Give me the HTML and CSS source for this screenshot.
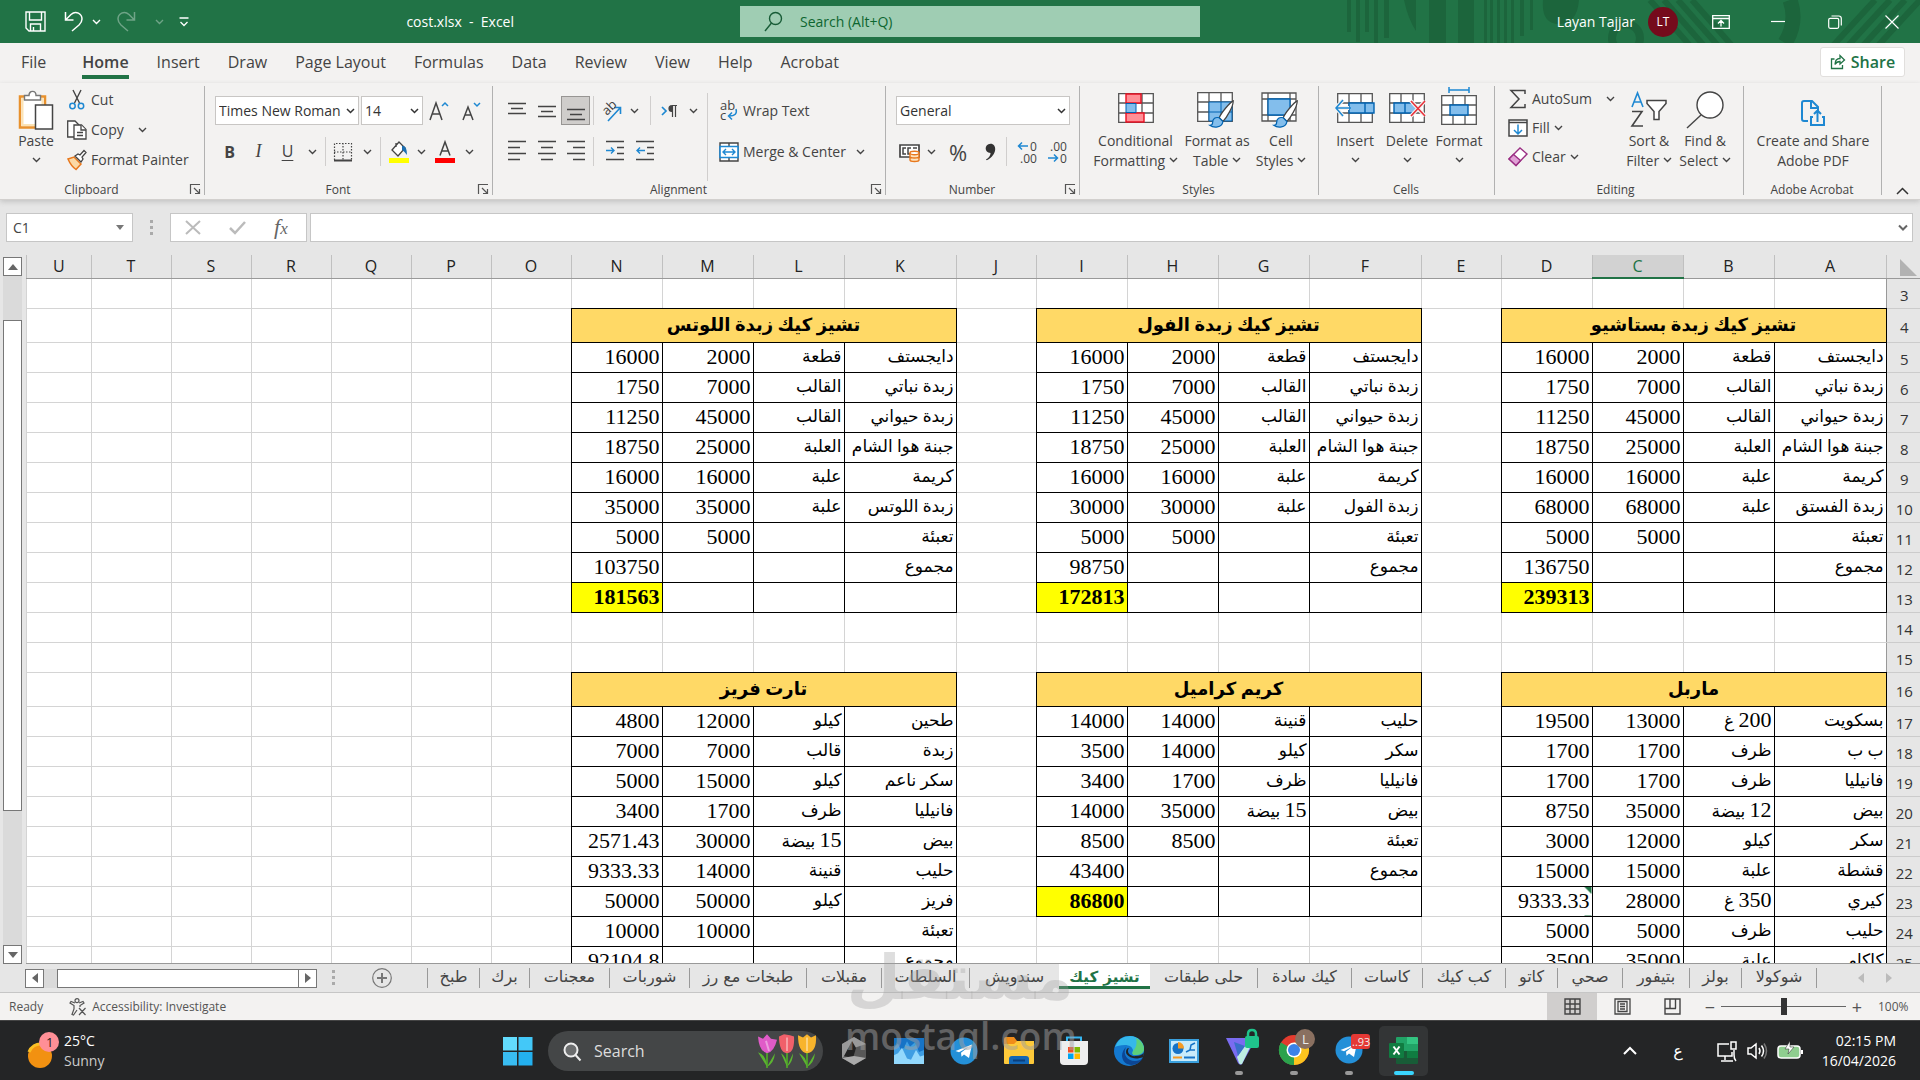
FILE: index.html
```html
<!DOCTYPE html>
<html lang="en">
<head>
<meta charset="utf-8">
<title>cost.xlsx - Excel</title>
<link rel="stylesheet" href="styles.css">
</head>
<body>
<svg class="defs" aria-hidden="true">
  <symbol id="chev" viewBox="0 0 9 6"><path d="M1 1l3.500 3.500L8 1" fill="none" stroke="currentColor" stroke-width="1.400"/></symbol>
  <symbol id="launch" viewBox="0 0 12 12"><path d="M1.500 11V1.500H11M5 5l5.500 5.500M10.500 6v4.500H6" fill="none" stroke="#555" stroke-width="1.200"/></symbol>
  <symbol id="gridbase" viewBox="0 0 36 30"><path d="M.7.700h34.600v28.600H.7z" fill="#fff"/><path d="M.7.700h34.600v28.600H.7zM.7 10h34.600M.7 20h34.600M12 .7v28.600M24 .7v28.600" fill="none" stroke="#555" stroke-width="1.300"/></symbol>
  <symbol id="brush" viewBox="0 0 28 32"><path d="M26 2C22 4 13 15 11 20l4 4C19 20 26 8 26 2z" fill="#fff" stroke="#444" stroke-width="1.300"/><path d="M11 20c-4-1-7 1-7 5 0 2-1 3-3 3 4 3 13 3 14-4z" fill="#83beec" stroke="#0063b1" stroke-width="1.300"/></symbol>
  <symbol id="plane" viewBox="0 0 28 28"><circle cx="14" cy="14" r="13.500" fill="#2490d8"/><path d="M5.500 14L22 7.500 19 21l-5-3.600-2.500 2.400-.5-4 7-5.500-9 5z" fill="#fff"/></symbol>
</svg>

<header class="titlebar">
  <div class="quick">
    <button aria-label="Save"><svg width="21" height="21" viewBox="0 0 21 21" fill="none" stroke="#fff" stroke-width="1.400"><path d="M1 1h19v19H4l-3-3zM4.500 1v8h12V1M5.500 20v-7h10v7M8.500 20v-4"/></svg></button>
    <button aria-label="Undo"><svg width="20" height="21" viewBox="0 0 20 21" fill="none" stroke="#fff" stroke-width="1.500"><path d="M1.500 1v8h8M1.500 9L7 3.500C12-1 18 3 18 8c0 3-1 4-3 6l-7 6"/></svg></button>
    <button aria-label="Undo list"><svg width="9" height="6"><use href="#chev"/></svg></button>
    <button class="dim" aria-label="Redo"><svg width="20" height="21" viewBox="0 0 20 21" fill="none" stroke="#fff" stroke-width="1.500"><path d="M18.500 1v8h-8M18.500 9L13 3.500C8-1 2 3 2 8c0 3 1 4 3 6l7 6"/></svg></button>
    <button class="dim" aria-label="Redo list"><svg width="9" height="6"><use href="#chev"/></svg></button>
    <button aria-label="Customize toolbar"><svg width="10" height="10" viewBox="0 0 10 10" fill="none" stroke="#fff" stroke-width="1.300"><path d="M.5 1h9M1.500 5L5 8.500 8.500 5"/></svg></button>
  </div>
  <h1>cost.xlsx&nbsp; -&nbsp; Excel</h1>
  <label class="search"><svg width="19" height="22" viewBox="0 0 19 22" fill="none" stroke="#185c37" stroke-width="1.400"><circle cx="11.500" cy="7.500" r="6"/><path d="M7.500 12L1 20"/></svg><input type="search" placeholder="Search (Alt+Q)" aria-label="Search"></label>
  <div class="account">
    <svg class="pattern" viewBox="0 0 620 43" fill="#1c653c" stroke="#1c653c" aria-hidden="true"><path stroke="none" d="M47 0h4v32h-4zM56 0h4v42h-4zM65 0h4v32h-4zM74 0h4v43h-4zM84 0h5v38h-5zM104 0h12v31q-8-12-12-31M129 0h17v43h-17zM158 0h16v43h-16zM184 0h3v43h-3zM190 0h3v43h-3zM197 0h3v43h-3zM204 0h3v43h-3zM211 0h3v43h-3zM220 0h4v36h-4zM230 0h3v30h-3zM243 0h36q-2 24-20 24T243 0z"/><g fill="none"><circle cx="326" cy="38" r="14" stroke-width="8"/><path d="M350 0l42 48M364 0l42 48M378 0l42 48M392 0l42 48" stroke-width="6"/><path d="M490 0q8 22-5 43" stroke-width="15"/><path d="M575 0l-46 50M590 0l-46 50M605 0l-46 50M620 0l-46 50" stroke-width="6"/></g></svg>
    <span class="user">Layan Tajjar</span><span class="avatar">LT</span>
    <button aria-label="Ribbon display options"><svg width="18" height="14" viewBox="0 0 18 14" fill="none" stroke="#fff" stroke-width="1.300"><path d="M.7.700h16.600v12.600H.7zM.7 3.500h16.600M9 11.500V6M6 8.500L9 5.500l3 3"/></svg></button>
    <button aria-label="Minimize"><svg width="14" height="14" viewBox="0 0 14 14" stroke="#fff" stroke-width="1.200"><path d="M0 6.500h14"/></svg></button>
    <button aria-label="Restore"><svg width="14" height="14" viewBox="0 0 14 14" fill="none" stroke="#fff" stroke-width="1.200"><rect x=".7" y="3.300" width="10" height="10" rx="1.500"/><path d="M3.500 1h7.300q2.500 0 2.500 2.500v7"/></svg></button>
    <button aria-label="Close"><svg width="14" height="14" viewBox="0 0 14 14" stroke="#fff" stroke-width="1.200"><path d="M.5.500l13 13M13.500.500l-13 13"/></svg></button>
  </div>
</header>

<nav class="tabs">
  <a href="#">File</a><a href="#" class="on">Home</a><a href="#">Insert</a><a href="#">Draw</a><a href="#">Page Layout</a><a href="#">Formulas</a><a href="#">Data</a><a href="#">Review</a><a href="#">View</a><a href="#">Help</a><a href="#">Acrobat</a>
  <button class="share"><svg width="16" height="16" viewBox="0 0 16 16" fill="none" stroke="#217346" stroke-width="1.300"><path d="M4.500 5H1.500v9.500h11V11M5 10.500c0-4 2-6 5-6V1.500L14.500 6 10 10V7.500c-2.500 0-4 1-5 3z"/></svg>Share</button>
</nav>

<section class="ribbon" aria-label="Home ribbon">
  <div class="group clip">
    <div class="body">
      <button class="big"><svg width="36" height="40" viewBox="0 0 36 40"><path d="M2 6.500h25v31H2z" fill="#fff" stroke="#e8912d" stroke-width="2.500"/><path d="M4.500 9h20v26h-20z" fill="none" stroke="#fbe3b5" stroke-width="2"/><path d="M6.500 10V5.500H11C11 0 18 0 18 5.500h4.500V10z" fill="#fff" stroke="#777" stroke-width="1.400"/><path d="M17.500 15h17v24h-17z" fill="#fff" stroke="#444" stroke-width="1.500"/></svg><span>Paste</span><svg class="down" width="9" height="6"><use href="#chev"/></svg></button>
      <div class="list">
        <button><svg width="20" height="20" viewBox="0 0 20 20" fill="none"><path d="M6 0l6.500 13M14 0L7.500 13" stroke="#444" stroke-width="1.400"/><circle cx="5.500" cy="16" r="2.700" stroke="#1e88d2" stroke-width="1.500"/><circle cx="14" cy="16" r="2.700" stroke="#1e88d2" stroke-width="1.500"/></svg>Cut</button>
        <button><svg width="20" height="20" viewBox="0 0 20 20" fill="#fff" stroke="#444" stroke-width="1.300"><path d="M7 17H.7V1H8l4 4"/><path d="M7 5h7.500L19 9.500V19H7z"/><path d="M14 5v5h5M10 12.500h6M10 15.500h6"/></svg>Copy<svg class="gap" width="9" height="6"><use href="#chev"/></svg></button>
        <button><svg width="20" height="20" viewBox="0 0 20 20"><path d="M1 9l6-2 7 7-5 5.500Q4 16 1 9z" fill="#fbd9a5" stroke="#e8781d" stroke-width="1.500"/><path d="M8 6l3-2 2 1 4-4.500 2 2-4 4.500 1 2-2 3z" fill="#fff" stroke="#444" stroke-width="1.300"/></svg>Format Painter</button>
      </div>
    </div>
    <footer>Clipboard<button aria-label="Clipboard settings"><svg width="12" height="12"><use href="#launch"/></svg></button></footer>
  </div>

  <div class="group font">
    <div class="body rows">
      <div class="row fr1">
        <select aria-label="Font"><option>Times New Roman</option></select><select aria-label="Font size"><option>14</option></select>
        <button aria-label="Increase font size"><svg width="20" height="20" viewBox="0 0 20 20" fill="none" stroke="#444" stroke-width="1.500"><path d="M1 19L7 2l6 17M3 13h8"/><path d="M13 5l3-3 3 3" stroke="#1e88d2"/></svg></button>
        <button aria-label="Decrease font size"><svg width="20" height="20" viewBox="0 0 20 20" fill="none" stroke="#444" stroke-width="1.500"><path d="M2 19L7 6l5 13M4 14h6"/><path d="M13 2l3 3 3-3" stroke="#1e88d2"/></svg></button>
      </div>
      <div class="row fr2">
        <button><b>B</b></button><button class="it">I</button><button class="un">U</button><button aria-label="Underline list"><svg width="9" height="6"><use href="#chev"/></svg></button><i></i>
        <button aria-label="Borders"><svg width="20" height="20" viewBox="0 0 20 20" fill="none" stroke="#444"><path d="M1.500 18V1.500h17V18M10 1v17M1 10h18" stroke-width="1.200" stroke-dasharray="1.500 1.500"/><path d="M1 18.500h18" stroke-width="2"/></svg></button><button aria-label="Borders list"><svg width="9" height="6"><use href="#chev"/></svg></button><i></i>
        <button aria-label="Fill color"><svg width="20" height="22" viewBox="0 0 20 22"><path d="M0 17h20v5H0z" fill="#ff0"/><path d="M3 9l7-8 6 6-7 8zM7 6V2" fill="#fff" stroke="#444" stroke-width="1.300"/><path d="M13 5q5-1 5 9-3-4-5-5z" fill="#1e6fb0"/></svg></button><button aria-label="Fill list"><svg width="9" height="6"><use href="#chev"/></svg></button>
        <button aria-label="Font color"><svg width="20" height="22" viewBox="0 0 20 22"><path d="M0 17h20v5H0z" fill="#f00"/><path d="M5 14.500L10 1l5 13.500M7 10h6" fill="none" stroke="#444" stroke-width="1.500"/></svg></button><button aria-label="Font color list"><svg width="9" height="6"><use href="#chev"/></svg></button>
      </div>
    </div>
    <footer>Font<button aria-label="Font settings"><svg width="12" height="12"><use href="#launch"/></svg></button></footer>
  </div>

  <div class="group align">
    <div class="body">
      <div class="rows">
        <div class="row ar">
          <button aria-label="Top align"><svg width="18" height="20" viewBox="0 0 18 20" stroke="#444" stroke-width="1.400"><path d="M0 2.500h18M3 7.500h12M0 12.500h18"/></svg></button>
          <button aria-label="Middle align"><svg width="18" height="20" viewBox="0 0 18 20" stroke="#444" stroke-width="1.400"><path d="M0 5.500h18M3 10.500h12M0 15.500h18"/></svg></button>
          <button class="pressed" aria-label="Bottom align"><svg width="18" height="20" viewBox="0 0 18 20" stroke="#444" stroke-width="1.400"><path d="M0 8.500h18M3 13.500h12M0 18.500h18"/></svg></button><i></i>
          <button aria-label="Orientation"><svg width="22" height="22" viewBox="0 0 22 22"><path d="M8 21L20 8M14 7.500h6.500V14" fill="none" stroke="#1e88d2" stroke-width="1.600"/><text font-size="13" transform="translate(7 16) rotate(-45)">ab</text></svg></button><button aria-label="Orientation list"><svg width="9" height="6"><use href="#chev"/></svg></button><i></i>
          <button aria-label="Text direction"><svg width="18" height="16" viewBox="0 0 18 16"><path d="M1 4l4 4-4 4" fill="none" stroke="#1e88d2" stroke-width="1.700"/><path d="M16 2.500H11a3 3 0 000 6V2.500M11.500 2v12M14.500 2v12" fill="#444" stroke="#444" stroke-width="1.200"/></svg></button><button aria-label="Direction list"><svg width="9" height="6"><use href="#chev"/></svg></button>
        </div>
        <div class="row ar2">
          <button aria-label="Align left"><svg width="18" height="21" viewBox="0 0 18 21" stroke="#444" stroke-width="1.400"><path d="M0 .5h18M0 6.500h12M0 12.500h18M0 18.500h12"/></svg></button>
          <button aria-label="Center"><svg width="18" height="21" viewBox="0 0 18 21" stroke="#444" stroke-width="1.400"><path d="M0 .5h18M3 6.500h12M0 12.500h18M3 18.500h12"/></svg></button>
          <button aria-label="Align right"><svg width="18" height="21" viewBox="0 0 18 21" stroke="#444" stroke-width="1.400"><path d="M0 .5h18M6 6.500h12M0 12.500h18M6 18.500h12"/></svg></button><i></i>
          <button aria-label="Decrease indent"><svg width="18" height="21" viewBox="0 0 18 21" fill="none" stroke="#444" stroke-width="1.400"><path d="M0 .5h18M11 6.500h7M11 12.500h7M0 18.500h18"/><path d="M0 9.500h8M5 6.500l3 3-3 3" stroke="#1e88d2"/></svg></button>
          <button aria-label="Increase indent"><svg width="18" height="21" viewBox="0 0 18 21" fill="none" stroke="#444" stroke-width="1.400"><path d="M0 .5h18M11 6.500h7M11 12.500h7M0 18.500h18"/><path d="M1 9.500h8M4 6.500l-3 3 3 3" stroke="#1e88d2"/></svg></button>
        </div>
      </div>
      <div class="rows wrap">
        <button><svg width="20" height="20" viewBox="0 0 20 20"><text x="1" y="9" font-size="13">ab</text><text x="1" y="19" font-size="13">c</text><path d="M17 8q2 7-7 7M13 11.500L9.500 15l3.500 3.500" fill="none" stroke="#1e88d2" stroke-width="1.500"/></svg>Wrap Text</button>
        <button><svg width="20" height="20" viewBox="0 0 20 20" fill="none"><path d="M1 1h18v18H1zM10 1v4M10 15v4" fill="#fff" stroke="#444" stroke-width="1.400"/><path d="M1 4.500h18v11H1z" fill="#fff" stroke="#1e88d2" stroke-width="1.600"/><path d="M4 10h12M7 7l-3 3 3 3M13 7l3 3-3 3" stroke="#1e88d2" stroke-width="1.400"/></svg>Merge &amp; Center<svg class="gap" width="9" height="6"><use href="#chev"/></svg></button>
      </div>
    </div>
    <footer>Alignment<button aria-label="Alignment settings"><svg width="12" height="12"><use href="#launch"/></svg></button></footer>
  </div>

  <div class="group number">
    <div class="body rows">
      <div class="row"><select aria-label="Number format"><option>General</option></select></div>
      <div class="row nr">
        <button aria-label="Accounting format"><svg width="22" height="22" viewBox="0 0 22 22" fill="none"><path d="M1 4h19v12H1z" fill="#fff" stroke="#444" stroke-width="1.700"/><path d="M7 7H4v6h3M12 7H9v6h3M14 7h4" stroke="#444" stroke-width="1.500"/><path d="M11 12v7c0 2 9 2 9 0v-7M11 15.500c0 2 9 2 9 0" fill="#fde3bd" stroke="#e8781d" stroke-width="1.400"/><ellipse cx="15.500" cy="12" rx="4.500" ry="1.700" fill="#fff" stroke="#e8781d" stroke-width="1.400"/></svg></button><button aria-label="Accounting list"><svg width="9" height="6"><use href="#chev"/></svg></button>
        <button class="pct">%</button>
        <button aria-label="Comma style"><svg width="11" height="18" viewBox="0 0 12 18"><path d="M6 0c7 0 8 12-4 18l-1-1c4-2 5-5 5-7C-1 10-1 0 6 0z" fill="#333"/></svg></button><i></i>
        <button aria-label="Increase decimal"><svg width="20" height="24" viewBox="0 0 20 24"><text x="13" y="11" font-size="12">0</text><text x="3" y="23" font-size="12">.00</text><path d="M11 6H1.500M5 2.500L1.500 6 5 9.500" fill="none" stroke="#1e88d2" stroke-width="1.500"/></svg></button>
        <button aria-label="Decrease decimal"><svg width="20" height="24" viewBox="0 0 20 24"><text x="3" y="11" font-size="12">.00</text><text x="13" y="23" font-size="12">0</text><path d="M1 18h9.500M7 14.500l3.500 3.500L7 21.500" fill="none" stroke="#1e88d2" stroke-width="1.500"/></svg></button>
      </div>
    </div>
    <footer>Number<button aria-label="Number settings"><svg width="12" height="12"><use href="#launch"/></svg></button></footer>
  </div>

  <div class="group styles">
    <div class="body">
      <button class="big"><svg width="36" height="30" viewBox="0 0 36 30"><use href="#gridbase"/><path d="M8 1h15v9H8zM8 20h18v9H8z" fill="#ff8f96" stroke="#e81123" stroke-width="1.400"/><path d="M8 10.500h10v9H8z" fill="#83beec" stroke="#0063b1"/></svg><span>Conditional<br>Formatting <svg width="9" height="6"><use href="#chev"/></svg></span></button>
      <button class="big"><svg width="40" height="38" viewBox="0 0 40 38"><use href="#gridbase" width="36" height="30" y="1"/><path d="M12 11h23v19H12z" fill="#83beec" stroke="#0063b1"/><path d="M24 11v19M12 21h23" stroke="#0063b1"/><use href="#brush" x="11" y="8" width="28" height="30"/></svg><span>Format as<br>Table <svg width="9" height="6"><use href="#chev"/></svg></span></button>
      <button class="big"><svg width="40" height="38" viewBox="0 0 40 38"><path d="M1 2h34v28H1zM1 8h34M1 24h34M7 2v28M29 2v28" fill="#fff" stroke="#555" stroke-width="1.300"/><path d="M7 8h22v16H7z" fill="#83beec" stroke="#0063b1" stroke-width="1.300"/><use href="#brush" x="11" y="8" width="28" height="30"/></svg><span>Cell<br>Styles <svg width="9" height="6"><use href="#chev"/></svg></span></button>
    </div>
    <footer>Styles</footer>
  </div>

  <div class="group cells">
    <div class="body">
      <button class="big"><svg width="40" height="30" viewBox="0 0 40 30"><use href="#gridbase" width="36" height="30" x="2"/><path d="M14 10h25v10H14zM30 10v10" fill="#83beec" stroke="#0063b1" stroke-width="1.400"/><path d="M0 15h14M8 7l-7 8 7 8" fill="none" stroke="#f3f2f1" stroke-width="4"/><path d="M1 15h15M8 7l-7 8 7 8" fill="none" stroke="#1e88d2" stroke-width="1.500"/></svg><span>Insert</span><svg class="down" width="9" height="6"><use href="#chev"/></svg></button>
      <button class="big"><svg width="40" height="30" viewBox="0 0 40 30"><use href="#gridbase" width="36" height="30" x="2"/><path d="M7 10h19l4 5-4 5H7zM18 10v10" fill="#83beec" stroke="#0063b1" stroke-width="1.400"/><path d="M24 8l14 15M38 8L24 23" stroke="#f3f2f1" stroke-width="4"/><path d="M24 8l14 15M38 8L24 23" stroke="#e8313a" stroke-width="1.600"/></svg><span>Delete</span><svg class="down" width="9" height="6"><use href="#chev"/></svg></button>
      <button class="big tall"><svg width="36" height="40" viewBox="0 0 36 40"><path d="M8 3h20M8 0v6M28 0v6" stroke="#1e88d2" stroke-width="1.500"/><use href="#gridbase" width="36" height="30" y="8"/><path d="M9 18h18v10H9z" fill="#83beec" stroke="#0063b1" stroke-width="1.400"/></svg><span>Format</span><svg class="down" width="9" height="6"><use href="#chev"/></svg></button>
    </div>
    <footer>Cells</footer>
  </div>

  <div class="group edit">
    <div class="body">
      <div class="list">
        <button><svg width="20" height="20" viewBox="0 0 20 20" fill="none" stroke="#444" stroke-width="1.500"><path d="M17 5V1.500H3l8 8.500-8 8.500h14V15"/></svg>AutoSum<svg class="gap" width="9" height="6"><use href="#chev"/></svg></button>
        <button><svg width="20" height="20" viewBox="0 0 20 20" fill="none"><path d="M1 2h18v16H1z" fill="#fff" stroke="#444" stroke-width="1.500"/><path d="M1 4.500h18" stroke="#444" stroke-width="1.500"/><path d="M10 6.500V16M6 12l4 4 4-4" stroke="#1e88d2" stroke-width="1.500"/></svg>Fill<svg class="near" width="9" height="6"><use href="#chev"/></svg></button>
        <button><svg width="20" height="20" viewBox="0 0 20 20"><path d="M1 12L12 1l7 6L8 18.500z" fill="#fff" stroke="#9b2f84" stroke-width="1.400"/><path d="M1 12l4.500-4.500 7 6L8 18.500z" fill="#e0a1d6" stroke="#9b2f84" stroke-width="1.400"/></svg>Clear<svg class="near" width="9" height="6"><use href="#chev"/></svg></button>
      </div>
      <button class="big"><svg width="36" height="36" viewBox="0 0 36 36" fill="none"><path d="M1 15L6.500 1 12 15M3 10h7" stroke="#1e88d2" stroke-width="1.600"/><path d="M1 19.500h10L1 34h11" stroke="#444" stroke-width="1.600"/><path d="M16 8.500h19v3l-7 8v8h-5v-8l-7-8z" fill="#fff" stroke="#444" stroke-width="1.500"/></svg><span>Sort &amp;<br>Filter <svg width="9" height="6"><use href="#chev"/></svg></span></button>
      <button class="big"><svg width="38" height="38" viewBox="0 0 38 38" fill="#fff" stroke="#444" stroke-width="1.400"><circle cx="24" cy="14" r="13"/><path d="M15 24L1 37"/></svg><span>Find &amp;<br>Select <svg width="9" height="6"><use href="#chev"/></svg></span></button>
    </div>
    <footer>Editing</footer>
  </div>

  <div class="group pdf">
    <div class="body">
      <button class="big"><svg width="26" height="28" viewBox="0 0 26 28" fill="none" stroke="#1e88d2" stroke-width="2"><path d="M8 22H4q-2 0-2-2V4q0-2 2-2h8l6 6v4M11 2v7h7M13 18h-2v8h13v-8h-2M17.500 23V12M14 15l3.500-3.500L21 15"/></svg><span>Create and Share<br>Adobe PDF</span></button>
    </div>
    <footer>Adobe Acrobat</footer>
  </div>
  <button class="collapse" aria-label="Collapse ribbon"><svg width="13" height="8" viewBox="0 0 13 8" fill="none" stroke="#333" stroke-width="1.500"><path d="M1 7l5.500-5.500L12 7"/></svg></button>
</section>

<div class="formula">
  <div class="namebox"><input value="C1" aria-label="Name box"><svg width="8" height="5"><path d="M0 0h8L4 5z" fill="#777"/></svg></div>
  <span class="dots"></span>
  <div class="fx">
    <button aria-label="Cancel"><svg width="16" height="15" viewBox="0 0 16 15"><path d="M1 1l14 13M15 1L1 14" stroke="#bbb" stroke-width="2"/></svg></button>
    <button aria-label="Enter"><svg width="17" height="14" viewBox="0 0 17 14"><path d="M1 7l5 5L16 1" fill="none" stroke="#bbb" stroke-width="2.500"/></svg></button>
    <button class="f"><em>f<small>x</small></em></button>
  </div>
  <div class="bar"><input aria-label="Formula bar"><svg width="10" height="7"><path d="M1 1.500L5 5.500 9 1.500" fill="none" stroke="#666" stroke-width="2"/></svg></div>
</div>

<main class="sheet">
  <div class="vscroll"><button aria-label="Scroll up"><svg width="10" height="6"><path d="M0 6L5 0l5 6z" fill="#666"/></svg></button><div class="vtrack"><div class="vthumb"></div></div><button aria-label="Scroll down"><svg width="10" height="6"><path d="M0 0h10L5 6z" fill="#666"/></svg></button></div>
  <div class="cellsview">
    <table dir="rtl">
      <colgroup><col class="h"><col class="w"><col span="3"><col class="e"><col class="w"><col span="3"><col class="e"><col class="w"><col span="3"><col class="e" span="6"><col class="u"></colgroup>
      <thead><tr><th><svg width="17" height="17"><path d="M0 0v17h17z" fill="#b2b2b2"/></svg><th>A<th>B<th class="sel">C<th>D<th>E<th>F<th>G<th>H<th>I<th>J<th>K<th>L<th>M<th>N<th>O<th>P<th>Q<th>R<th>S<th>T<th>U</tr></thead>
      <tbody>
      <tr><th>3 <td><td><td> <td><td><td> <td><td><td> <td><td><td> <td><td><td> <td><td><td> <td><td><td>
      <tr class="t"><th>4<td colspan="4">تشيز كيك زبدة بستاشيو<td><td colspan="4">تشيز كيك زبدة الفول<td><td colspan="4">تشيز كيك زبدة اللوتس <td><td><td> <td><td><td> <td>
      <tr class="r"><th>5<td>دايجستف<td>قطعة<td>2000<td>16000<td><td>دايجستف<td>قطعة<td>2000<td>16000<td><td>دايجستف<td>قطعة<td>2000<td>16000 <td><td><td> <td><td><td> <td>
      <tr class="r"><th>6<td>زبدة نباتي<td>القالب<td>7000<td>1750<td><td>زبدة نباتي<td>القالب<td>7000<td>1750<td><td>زبدة نباتي<td>القالب<td>7000<td>1750 <td><td><td> <td><td><td> <td>
      <tr class="r"><th>7<td>زبدة حيواني<td>القالب<td>45000<td>11250<td><td>زبدة حيواني<td>القالب<td>45000<td>11250<td><td>زبدة حيواني<td>القالب<td>45000<td>11250 <td><td><td> <td><td><td> <td>
      <tr class="r"><th>8<td>جبنة هوا الشام<td>العلبة<td>25000<td>18750<td><td>جبنة هوا الشام<td>العلبة<td>25000<td>18750<td><td>جبنة هوا الشام<td>العلبة<td>25000<td>18750 <td><td><td> <td><td><td> <td>
      <tr class="r"><th>9<td>كريمة<td>علبة<td>16000<td>16000<td><td>كريمة<td>علبة<td>16000<td>16000<td><td>كريمة<td>علبة<td>16000<td>16000 <td><td><td> <td><td><td> <td>
      <tr class="r"><th>10<td>زبدة الفستق<td>علبة<td>68000<td>68000<td><td>زبدة الفول<td>علبة<td>30000<td>30000<td><td>زبدة اللوتس<td>علبة<td>35000<td>35000 <td><td><td> <td><td><td> <td>
      <tr class="r"><th>11<td>تعبئة<td><td>5000<td>5000<td><td>تعبئة<td><td>5000<td>5000<td><td>تعبئة<td><td>5000<td>5000 <td><td><td> <td><td><td> <td>
      <tr class="r"><th>12<td>مجموع<td><td><td>136750<td><td>مجموع<td><td><td>98750<td><td>مجموع<td><td><td>103750 <td><td><td> <td><td><td> <td>
      <tr class="r"><th>13 <td><td><td> <td class="y">239313 <td> <td><td><td> <td class="y">172813 <td> <td><td><td> <td class="y">181563 <td><td><td> <td><td><td> <td>
      <tr><th>14 <td><td><td> <td><td><td> <td><td><td> <td><td><td> <td><td><td> <td><td><td> <td><td><td>
      <tr><th>15 <td><td><td> <td><td><td> <td><td><td> <td><td><td> <td><td><td> <td><td><td> <td><td><td>
      <tr class="t"><th>16<td colspan="4">ماربل<td><td colspan="4">كريم كراميل<td><td colspan="4">تارت فريز <td><td><td> <td><td><td> <td>
      <tr class="r"><th>17<td>بسكويت<td><span>200</span> غ<td>13000<td>19500<td><td>حليب<td>قنينة<td>14000<td>14000<td><td>طحين<td>كيلو<td>12000<td>4800 <td><td><td> <td><td><td> <td>
      <tr class="r"><th>18<td>ب ب<td>ظرف<td>1700<td>1700<td><td>سكر<td>كيلو<td>14000<td>3500<td><td>زبدة<td>قالب<td>7000<td>7000 <td><td><td> <td><td><td> <td>
      <tr class="r"><th>19<td>فانيليا<td>ظرف<td>1700<td>1700<td><td>فانيليا<td>ظرف<td>1700<td>3400<td><td>سكر ناعم<td>كيلو<td>15000<td>5000 <td><td><td> <td><td><td> <td>
      <tr class="r"><th>20<td>بيض<td><span>12</span> بيضة<td>35000<td>8750<td><td>بيض<td><span>15</span> بيضة<td>35000<td>14000<td><td>فانيليا<td>ظرف<td>1700<td>3400 <td><td><td> <td><td><td> <td>
      <tr class="r"><th>21<td>سكر<td>كيلو<td>12000<td>3000<td><td>تعبئة<td><td>8500<td>8500<td><td>بيض<td><span>15</span> بيضة<td>30000<td>2571.43 <td><td><td> <td><td><td> <td>
      <tr class="r"><th>22<td>قشطة<td>علبة<td>15000<td>15000<td><td>مجموع<td><td><td>43400<td><td>حليب<td>قنينة<td>14000<td>9333.33 <td><td><td> <td><td><td> <td>
      <tr class="r"><th>23<td>كيري<td><span>350</span> غ<td>28000<td class="note">9333.33 <td> <td><td><td> <td class="y">86800<td><td>فريز<td>كيلو<td>50000<td>50000 <td><td><td> <td><td><td> <td>
      <tr class="r s"><th>24<td>حليب<td>ظرف<td>5000<td>5000 <td><td><td> <td><td><td> <td>تعبئة<td><td>10000<td>10000 <td><td><td> <td><td><td> <td>
      <tr class="r s"><th>25<td>كاكاو<td>علبة<td>35000<td>3500 <td><td><td> <td><td><td> <td>مجموع<td><td><td>92104.8 <td><td><td> <td><td><td> <td>
      </tbody>
    </table>
  </div>
</main>

<div class="sheetbar">
  <div class="hscroll"><button aria-label="Scroll left"><svg width="6" height="10"><path d="M6 0v10L0 5z" fill="#666"/></svg></button><div class="htrack"><div class="hthumb"></div></div><button aria-label="Scroll right"><svg width="6" height="10"><path d="M0 0v10l6-5z" fill="#666"/></svg></button></div>
  <span class="dots"></span>
  <button class="add" aria-label="New sheet"><svg width="20" height="20" viewBox="0 0 20 20" fill="none" stroke="#777"><circle cx="10" cy="10" r="9.300" stroke-width="1.200"/><path d="M10 5v10M5 10h10" stroke-width="2"/></svg></button>
  <nav class="sheets"><a href="#">طبخ</a><a href="#">برك</a><a href="#">معجنات</a><a href="#">شوربات</a><a href="#">طبخات مع رز</a><a href="#">مقبلات</a><a href="#">السلطات</a><a href="#" class="bare">سندويش</a><a href="#" class="on">تشيز كيك</a><a href="#">حلى طبقات</a><a href="#">كيك سادة</a><a href="#">كاسات</a><a href="#">كب كيك</a><a href="#">كاتو</a><a href="#">صحي</a><a href="#">بتيفور</a><a href="#">بولز</a><a href="#">شوكولا</a></nav>
  <div class="navs"><button aria-label="Previous sheets"><svg width="6" height="10"><path d="M6 0v10L0 5z" fill="#bbb"/></svg></button><button aria-label="Next sheets"><svg width="6" height="10"><path d="M0 0v10l6-5z" fill="#bbb"/></svg></button></div>
</div>

<div class="status">
  <span>Ready</span>
  <button class="acc"><svg width="18" height="18" viewBox="0 0 18 18" fill="none" stroke="#555" stroke-width="1.200"><circle cx="8" cy="2.700" r="2"/><path d="M6 5L2 3.500 1 5l4 2.500V11l-2 5.500 1.500.5L8 12M10 5l4-1.500L15 5l-4 2.500V9M10 10l6.500 7M16.500 10L10 17"/></svg>Accessibility: Investigate</button>
  <div class="views">
    <button class="on" aria-label="Normal view"><svg width="17" height="17" viewBox="0 0 17 17" fill="none" stroke="#444" stroke-width="1.400"><path d="M1 1h15v15H1zM1 6h15M1 11h15M6 1v15M11 1v15"/></svg></button>
    <button aria-label="Page layout"><svg width="17" height="17" viewBox="0 0 17 17" fill="none" stroke="#444" stroke-width="1.300"><path d="M1 1h15v15H1zM4 3.500h9v10H4zM6 6h5M6 8.500h5M6 11h5"/></svg></button>
    <button aria-label="Page break preview"><svg width="17" height="17" viewBox="0 0 17 17" fill="none" stroke="#444" stroke-width="1.400"><path d="M1 1h15v15H1zM1 10.500h11M6 1v9.500M11.500 1v9.500"/></svg></button>
  </div>
  <div class="zoom"><button aria-label="Zoom out">−</button><input type="range" aria-label="Zoom" min="0" max="100" value="50"><button aria-label="Zoom in">+</button><span>100%</span></div>
</div>

<footer class="taskbar">
  <div class="weather"><svg width="32" height="42" viewBox="0 0 32 42"><circle cx="12" cy="26" r="12" fill="#f29111"/><path d="M1 22a12 12 0 0113-8" stroke="#fbbf24" stroke-width="3" fill="none"/><circle cx="21" cy="12" r="10" fill="#ff8f96"/><text x="18" y="17" font-size="13" class="dark">1</text></svg><p>25°C<br><span>Sunny</span></p></div>
  <div class="apps">
    <button aria-label="Start"><svg width="30" height="30" viewBox="0 0 30 30"><path d="M0 1h14v13.500H0z" fill="#63dcfd"/><path d="M15.500 1h14v13.500h-14z" fill="#43c8f8"/><path d="M0 16h14v13.500H0z" fill="#39bdf2"/><path d="M15.500 16h14v13.500h-14z" fill="#23b0ee"/></svg></button>
    <label class="find"><svg width="18" height="19" viewBox="0 0 18 19" fill="#6b6d6e" stroke="#eee" stroke-width="2"><circle cx="8" cy="8" r="6.500"/><path d="M12.500 13l5 5.500"/></svg><input type="search" placeholder="Search" aria-label="Taskbar search"><svg width="60" height="36" viewBox="0 0 60 32" preserveAspectRatio="none"><path d="M11 12v19M31 12v19M51 12v19" stroke="#4c9a2a" stroke-width="2"/><path d="M11 30L2 17q8 2 9 13l8-12q-1 9-8 12M31 30l-6-12q6 3 6 12l6-12q0 8-6 12M51 30l-8-12q8 3 8 12l8-12q-1 9-8 12" fill="#5cb531"/><path d="M2 3l5 2 4-4 4 4 6 1q-3 11-10 12-8-2-9-15" fill="#e05bc8"/><path d="M23 3l5-2 6 1 4 1q1 14-7 15-8-1-8-15" fill="#f0606a"/><path d="M42 2l5 2 4-3 4 3 5-2q1 15-9 16-9-1-9-16" fill="#f8b42c"/><path d="M10 7l3 9M31 4v12M51 4v12" stroke="#fff" stroke-opacity=".4" stroke-width="2"/></svg></label>
    <button aria-label="Cube"><svg width="28" height="30" viewBox="0 0 28 30"><path d="M14 1l12 7v14l-12 7-12-7V8z" fill="#585858"/><path d="M14 1l12 7-12 4L2 22V8z" fill="#999"/><path d="M12 5L4 20l9 2 3-10z" fill="#222"/><path d="M2 22l12-2 12 2-12 7z" fill="#aaa"/></svg></button>
    <button aria-label="Monitor"><svg width="30" height="26" viewBox="0 0 30 24" preserveAspectRatio="none"><path d="M0 0h30v24H0z" fill="#1673c6"/><path d="M0 18V9l4-4 3 6 3-2 3-6 3 5 5-4 4 9 5-2v13H0z" fill="#3e9ee3"/><path d="M0 24v-8l4-2 4-5 5 10 4 1 5-9 4 6 4-1v8z" fill="#92d8fc"/></svg></button>
    <button aria-label="Telegram"><svg width="28" height="28"><use href="#plane"/></svg></button>
    <button aria-label="Files"><svg width="30" height="28" viewBox="0 0 30 28"><path d="M0 2q0-2 2-2h8l3 4h15q2 0 2 2v6H0z" fill="#f08c1a"/><path d="M0 7h10l3-3h17v22q0 1-1 1H1q-1 0-1-1z" fill="#fdc93a"/><path d="M5 27v-5q0-3 3-3h14q3 0 3 3v5z" fill="#1467b5"/><path d="M9 23.500h12" stroke="#0b3f7b" stroke-width="2"/></svg></button>
    <button aria-label="Store"><svg width="30" height="30" viewBox="0 0 30 30"><path d="M8 6V1.500h14V6" fill="none" stroke="#35b6f2" stroke-width="2"/><path d="M1 5h28v20q0 4-4 4H5q-4 0-4-4z" fill="#eee"/><path d="M9 11h5.500v5.500H9z" fill="#f25022"/><path d="M15.500 11H21v5.500h-5.500z" fill="#7fba00"/><path d="M9 17.500h5.500V23H9z" fill="#00a4ef"/><path d="M15.500 17.500H21V23h-5.500z" fill="#ffb900"/></svg></button>
    <button aria-label="Edge"><svg width="30" height="30" viewBox="0 0 30 30"><circle cx="15" cy="15" r="15" fill="#1479d0"/><path d="M1 11Q5 0 16 0c9 0 14 7 14 12 0 5-4 7-9 7-3 0-3-2-2-4 0-4-4-6-8-6-5 0-8 1-10 2z" fill="#35b8ea"/><path d="M22 2c5 2 8 7 8 11 0 5-5 6-9 6-3 0-3-2-2-4 4-4 4-9 3-13z" fill="#5dd07a"/><path d="M12 11c-4 8 2 14 9 14 3 0 6-1 8-3-6 10-20 9-21-2 0-4 2-7 4-9z" fill="#0c4694"/><path d="M15 12c-3 4 1 9 7 8 3 0 6-1 8-3l-1 4c-9 4-17-1-17-5 0-2 1-4 3-4z" fill="#222425"/></svg></button>
    <button aria-label="Dashboard"><svg width="30" height="24" viewBox="0 0 30 24"><path d="M0 0h30v24H0z" fill="#3aa0dd"/><path d="M2 2h26v20H2z" fill="#c8ebfb"/><circle cx="9" cy="9.500" r="5.500" fill="#1673c6"/><path d="M9 9.500V3a6 6 0 016 6.500z" fill="#f59a23"/><path d="M17 13l4-2 1-5 4-2M21 11h5" fill="none" stroke="#1673c6" stroke-width="1.500"/><path d="M4 18.500h9" stroke="#f59a23" stroke-width="2"/><path d="M15 18.500h11" stroke="#1673c6" stroke-width="2"/></svg></button>
    <button class="run" aria-label="VPN"><svg width="36" height="38" viewBox="0 0 36 38"><path d="M2 10h27q3 0 1 4L18 36q-2 2-4-1z" fill="#7a6cf0"/><path d="M29 13L18 36q-2 1-3-1l-2-6 8-11z" fill="#bdeee2"/><path d="M10 14l11 4-7 10z" fill="#3a6fc9"/><path d="M24 9V6q0-4 4-4t4 4v3" fill="none" stroke="#1fc28b" stroke-width="2.500"/><rect x="21" y="8" width="14" height="12" rx="2" fill="#1fc28b"/></svg></button>
    <button class="run" aria-label="Chrome"><svg width="36" height="38" viewBox="0 0 36 38"><circle cx="15" cy="22" r="15" fill="#e33b2e"/><path d="M2 14.500A15 15 0 0015 37l7-11z" fill="#2ba24c"/><path d="M15 37a15 15 0 0013-22.500H15z" fill="#fcc31e"/><path d="M2 14.500L9 26l6 11A15 15 0 012 14.500z" fill="#2ba24c"/><circle cx="15" cy="22" r="7.500" fill="#fff"/><circle cx="15" cy="22" r="6" fill="#3b82e8"/><circle cx="26" cy="11" r="10" fill="#8a7060"/><text x="23" y="16" font-size="13" class="light">L</text></svg></button>
    <button class="run" aria-label="Telegram 93"><svg width="36" height="38" viewBox="0 0 36 38"><use href="#plane" x="1" y="8" width="28" height="28"/><rect x="17" y="6" width="19" height="15" rx="3" fill="#e53935"/><text x="18" y="18" font-size="11" class="light">..93</text></svg></button>
    <button class="run now" aria-label="Excel"><svg width="30" height="28" viewBox="0 0 30 28"><path d="M8 0h11v14H7V1q0-1 1-1z" fill="#21a366"/><path d="M18 0h10q1 0 1 1v13H18z" fill="#33c481"/><path d="M7 14h22v12q0 1-1 1H8q-1 0-1-1z" fill="#185c37"/><path d="M18 7h11v7H18z" fill="#21a366"/><path d="M18 14h11v7H18z" fill="#107c41"/><rect y="6" width="15" height="15" rx="1" fill="#107c41"/><path d="M4.500 9.500l6 8M10.500 9.500l-6 8" stroke="#fff" stroke-width="2"/></svg></button>
  </div>
  <div class="tray">
    <button aria-label="Hidden icons"><svg width="14" height="8" viewBox="0 0 14 8" fill="none" stroke="#fff" stroke-width="2"><path d="M1 7l6-6 6 6"/></svg></button>
    <span class="lang">ع</span>
    <svg width="20" height="21" viewBox="0 0 20 21" fill="none" stroke="#fff" stroke-width="1.500"><path d="M12 3H1v12h14v-4M8 15v4M4 20h12M17 9v5q0 4 2 6"/><path d="M14 1h5v7h-5z"/></svg>
    <svg width="20" height="18" viewBox="0 0 20 18" fill="none" stroke="#fff" stroke-width="1.500"><path d="M1 6v6h3l5 4V2L4 6zM12 6q2 3 0 6M14.500 3.500q4 5.500 0 11"/><path d="M17 1.500q5 7.500 0 15" stroke="#777"/></svg>
    <svg width="26" height="20" viewBox="0 0 26 20"><rect x="1" y="5" width="22" height="12" rx="3" fill="#8fce8f" stroke="#fff" stroke-width="1.500"/><path d="M25 9v4" stroke="#fff" stroke-width="2"/><path d="M13 0L8 8h4l-1 5 6-7h-4z" fill="#fff" stroke="#222" stroke-width=".5"/></svg>
    <time>02:15 PM<br>16/04/2026</time>
  </div>
</footer>

<div class="watermark"><b dir="rtl" lang="ar">مستقل</b><span>mostaql.com</span></div>
</body>
</html>
```
FILE: styles.css
```css
* { box-sizing: border-box; }
html, body { height: 100%; margin: 0; }
body { display: flex; flex-direction: column; overflow: hidden; background: #e6e6e6; color: #444; font: 14px/20px "Open Sans", "DejaVu Sans", sans-serif; position: relative; }
.defs { display: none; }
button { border: 0; background: none; padding: 0; margin: 0; font: inherit; color: inherit; white-space: nowrap; }
input, select { font: inherit; color: inherit; border: 0; background: none; padding: 0; margin: 0; min-width: 0; outline: 0; appearance: none; }
a { color: inherit; text-decoration: none; }
svg { display: block; flex: none; overflow: visible; }
svg text { fill: #444; font-family: "Open Sans", sans-serif; }
svg .dark { fill: #222; }
svg .light { fill: #eee; }

.titlebar { height: 43px; flex: none; display: grid; grid-template-columns: 740px 460px 1fr; align-items: center; background: #217346; color: #fff; position: relative; }
.quick { grid-area: 1 / 1; justify-self: start; z-index: 1; display: grid; grid-template-columns: 50px 20px 16px 36px 22px 20px; gap: 4px; padding-left: 10px; }
.quick button { display: grid; place-items: center; }
.quick .dim { opacity: .35; }
.titlebar h1 { grid-area: 1 / 1; justify-self: end; margin: 0; padding-right: 226px; font-size: 14px; font-weight: 400; }
.search { height: 31px; background: #9fcdb3; display: flex; align-items: center; gap: 17px; padding-left: 24px; color: #0e6630; }
.search input { flex: 1; }
.search input::placeholder { color: #0e6630; opacity: 1; }
.account { display: flex; align-items: center; justify-content: flex-end; height: 43px; position: relative; overflow: hidden; }
.account > * { position: relative; }
.account .pattern { position: absolute; left: 100px; top: 0; width: 620px; height: 43px; }
.account button { width: 57px; display: grid; place-items: center; }
.avatar { width: 30px; height: 30px; border-radius: 50%; background: #750b1c; font-size: 12px; line-height: 30px; text-align: center; margin: 0 14px 0 13px; }

.tabs { height: 40px; flex: none; background: #f3f2f1; display: flex; align-items: flex-start; gap: 28px; padding-left: 21px; font-size: 16px; }
.tabs a { line-height: 24px; padding: 7px 0 1px; border-bottom: 4px solid transparent; }
.tabs a:first-child { margin-right: 8px; }
.tabs .on { font-weight: 600; border-color: #217346; }
.share { margin: 4px 15px 0 auto; width: 85px; height: 30px; display: flex; align-items: center; justify-content: center; gap: 5px; background: #fff; border: 1px solid #e1dfdd; border-radius: 3px; color: #217346; font-weight: 600; }

.ribbon { height: 117px; flex: none; background: #f3f2f1; display: flex; border-bottom: 1px solid #d2d0ce; box-shadow: 0 2px 5px #c4c4c4; position: relative; }
.group { display: flex; flex-direction: column; position: relative; }
.group::after { content: ""; position: absolute; right: 0; top: 3px; bottom: 4px; border-right: 1px solid #b1b1b1; }
.group footer { height: 18px; line-height: 18px; padding-bottom: 2px; font-size: 12px; text-align: center; padding-right: 22px; }
.group footer button { position: absolute; right: 4px; bottom: 4px; }
.body { flex: 1; display: flex; }
.rows { display: flex; flex-direction: column; gap: 12px; padding-top: 13px; }
.row { display: grid; height: 29px; }
.row button { display: grid; place-items: center; }
.row i { width: 1px; justify-self: center; background: #d0cecd; }
.rows button { height: 29px; }
.row .it, .row .un { height: 28px; }
.clip { width: 205px; } .font { width: 288px; } .align { width: 393px; } .number { width: 194px; }
.styles { width: 239px; } .cells { width: 176px; } .edit { width: 249px; } .pdf { width: 138px; }
.big { display: flex; flex-direction: column; align-items: center; justify-content: flex-start; }
.big > svg:first-child { height: 48px; padding-top: 6px; }
.big span svg { display: inline-block; vertical-align: 3px; }
.down { margin-top: 6px; }
.list { display: flex; flex-direction: column; padding-top: 2px; }
.list button { height: 30px; display: flex; align-items: center; gap: 4px; }
.gap { margin-left: 10px; }
.clip .body { padding-left: 14px; gap: 9px; }
.clip .big { width: 44px; }
.font .body { padding-left: 10px; }
.fr1 { grid-template-columns: 144px 62px 28px 32px; column-gap: 2px; }
.fr2 { grid-template-columns: 29px 29px 29px 20px 6px 30px 18px 8px 29px 16px 32px 16px; }
select { height: 29px; width: 100%; border: 1px solid #c8c6c4; background: #fff url("data:image/svg+xml,%3Csvg xmlns='http://www.w3.org/2000/svg' width='9' height='6'%3E%3Cpath d='M1 1l3.500 3.500L8 1' fill='none' stroke='%23333' stroke-width='1.500'/%3E%3C/svg%3E") no-repeat right 3px center; padding-left: 3px; color: #333; }
.it { font: italic 18px/24px "Liberation Serif", serif; }
.un { text-decoration: underline; text-underline-offset: 3px; font-size: 16px; }
.fr2 b { font-size: 16px; }
.align .body { padding-left: 9px; }
.ar { grid-template-columns: 30px 29px 29px 7px 28px 18px 14px 26px 20px; }
.ar2 { grid-template-columns: 30px 29px 29px 7px 36px 24px; }
.pressed { background: #cfcdcb; border: 1px solid #979593; }
.wrap { border-left: 1px solid #d0cecd; margin: 10px 0 0 4px; padding: 3px 0 0 11px; }
.wrap button { display: flex; align-items: center; gap: 4px; }
.wrap .gap { margin-left: 6px; }
.number .body { padding: 13px 10px 0; }
.nr { grid-template-columns: 28px 14px 40px 24px 9px 32px 28px; }
.pct { font-size: 22px; }
.styles .body { padding-left: 12px; }
.styles .big:nth-child(1) { width: 87px; } .styles .big:nth-child(2) { width: 76px; } .styles .big:nth-child(3) { width: 52px; }
.cells .body { padding-left: 10px; }
.cells .big { width: 52px; }
.cells .big > svg:first-child, .styles .big:first-child > svg:first-child { padding-top: 2px; }
.cells .tall > svg:first-child { padding-top: 0; }
.edit .body { padding-left: 13px; }
.edit .list { width: 113px; padding-top: 1px; }
.edit .list button { height: 29px; gap: 4px; }
.edit .big { width: 56px; }
.edit footer { padding-left: 14px; }
.pdf .big { width: 100%; }
.pdf .big > svg:first-child { padding-top: 12px; }
.styles footer, .cells footer, .pdf footer { padding-right: 2px; }
.collapse { margin: auto 11px 4px auto; }

.formula { flex: none; display: flex; align-items: center; padding: 13px 7px 0 6px; height: 42px; }
.formula > div { height: 29px; border: 1px solid #c6c6c6; background: #fff; display: flex; align-items: center; }
.namebox { width: 127px; padding: 0 8px 0 6px; color: #444; }
.namebox input, .bar input { flex: 1; }
.dots { width: 3px; height: 16px; background: repeating-linear-gradient(#aaa 0 3px, transparent 3px 6px); flex: none; }
.formula .dots { margin: 0 17px; }
.fx { width: 137px; margin-right: 3px; padding-left: 14px; gap: 28px; }
.fx .f { font: italic 22px/24px "Liberation Serif", serif; color: #666; }
.fx small { font-size: 17px; }
.bar { flex: 1; padding-right: 4px; }

.sheet { flex: 1; min-height: 0; display: flex; padding-top: 13px; }
.vscroll { width: 26px; flex: none; display: flex; flex-direction: column; padding: 2px 4px 0 3px; }
.vscroll button, .hscroll button { flex: none; width: 19px; height: 19px; display: grid; place-items: center; background: #fff; border: 1px solid #777; }
.vtrack { flex: 1; background: #dadada; display: grid; grid-template-rows: 44fr 492fr 134fr; }
.vthumb { grid-row: 2; background: #fff; border: 1px solid #777; }
.cellsview { flex: 1; min-width: 0; overflow: hidden; border-bottom: 1px solid #999; position: relative; direction: rtl; }
table { width: 100%; table-layout: fixed; border-collapse: collapse; background: #fff; color: #000; }
col { width: 91px; } col.w { width: 112px; } col.e { width: 80px; } col.h { width: 34px; } col.u { width: auto; }
th { font-weight: 400; background: #e6e6e6; padding: 0; }
thead th { height: 23px; font-size: 16px; line-height: 20px; border-left: 1px solid #c0c0c0; border-bottom: 1px solid #999; color: #222; }
thead .sel { background: #d2d2d2; color: #217346; border-bottom: 2px solid #217346; }
tbody th { color: #333; border-left: 1px solid #999; border-bottom: 1px solid #ccc; font-size: 15px; line-height: 20px; padding-top: 4px; padding-left: 2px; }
tbody tr { height: 30px; }
tbody .t { height: 34px; }
td { border: 1px solid #d4d4d4; padding: 0 2px; font: 22px/24px "Liberation Serif", "DejaVu Sans", serif; text-align: right; white-space: nowrap; overflow: hidden; }
.r td:nth-child(5n+2), .r td:nth-child(5n+3) { font-size: 17px; }
.r td span { font-size: 22px; }
.r td:nth-child(n+2):nth-child(-n+5), .r:not(.s) td:nth-child(n+7):nth-child(-n+10), .r td:nth-child(n+12):nth-child(-n+15), .t td[colspan] { border: 1px double #000; }
.t td[colspan] { background: #ffd966; text-align: center; font-weight: 700; font-size: 18px; }
td.y { background: #ff0; font-weight: 700; }
td.note { background: linear-gradient(225deg, #217346 5px, transparent 5px); }
thead svg { margin: 2px 3px 0 auto; }

.sheetbar { flex: none; height: 29px; display: flex; align-items: center; border-bottom: 1px solid #c6c6c6; }
.hscroll { display: flex; margin-left: 25px; width: 292px; }
.htrack { flex: 1; background: #dadada; padding-left: 13px; }
.hthumb { height: 19px; background: #fff; border: 1px solid #777; border-right: 0; }
.sheetbar .dots { margin-left: 15px; }
.add { margin: 0 35px 0 37px; }
.sheets { display: grid; align-self: stretch; grid-template-columns: 53px 50px 80px 80px 117px 75px 88px 89px 91px 108px 94px 71px 83px 52px 65px 67px 52px 75px; font: 16px/20px "DejaVu Sans", sans-serif; }
.sheets a { margin: 4px 0 4px; border-right: 1px solid #999; text-align: center; direction: rtl; white-space: nowrap; line-height: 18px; }
.sheets a:first-child { border-left: 1px solid #999; }
.sheets .bare { border-right: 0; }
.sheets .on { margin: 0 0 3px; padding-top: 4px; background: #fff; border: 0; border-bottom: 3px solid #217346; color: #217346; font-size: 15px; font-weight: 700; }
.navs { margin-left: auto; display: flex; gap: 22px; padding-right: 28px; }

.status { flex: none; height: 27px; background: #f3f2f1; display: flex; align-items: center; padding-left: 9px; font-size: 12px; color: #555; }
.acc { display: flex; align-items: center; gap: 5px; margin-left: 26px; }
.views { margin-left: auto; display: flex; align-self: stretch; }
.views button { width: 50px; display: grid; place-items: center; }
.views .on { background: #d0cecd; }
.zoom { display: flex; align-items: center; padding: 0 10px 0 5px; }
.zoom button { width: 16px; font-size: 18px; }
.zoom input { width: 125px; height: 17px; margin: 0 3px; background: linear-gradient(#666, #666) center / 100% 1px no-repeat; }
.zoom input::-webkit-slider-thumb { appearance: none; width: 6px; height: 17px; background: #333; }
.zoom span { margin-left: 13px; width: 32px; }

.taskbar { flex: none; height: 60px; background: #242526; border-top: 1px solid #444; display: grid; grid-template-columns: 1fr auto 1fr; color: #fff; align-items: center; }
.weather { display: flex; align-items: center; gap: 4px; padding-left: 28px; }
.weather p { margin: 0; line-height: 20px; }
.weather span { color: #ccc; }
.apps { display: flex; align-items: center; height: 60px; padding-left: 4px; }
.apps button { width: 49px; height: 50px; margin: 0 3px; display: grid; place-items: center; border-radius: 5px; position: relative; }
.apps button:first-child { margin: 0 6px 0 0; }
.find { width: 275px; height: 40px; border-radius: 20px; background: #444647; display: flex; align-items: center; padding: 0 7px 0 15px; gap: 13px; margin-right: 3px; }
.find input { flex: 1; font-size: 16px; }
.find input::placeholder { color: #ddd; opacity: 1; }
.run::after { content: ""; position: absolute; bottom: 1px; left: 21px; width: 8px; height: 4px; border-radius: 2px; background: #999; }
.run svg { margin: -8px 0 0 6px; }
.now { background: #333536; }
.now svg { margin: 0; }
.now::after { left: 15px; width: 20px; background: #3ad5fd; }
.tray { justify-self: end; display: flex; align-items: center; padding-right: 24px; gap: 10px; }
.lang { margin: 0 24px 0 26px; font: 16px/20px "DejaVu Sans", sans-serif; }
time { text-align: right; line-height: 20px; margin-left: 9px; }

.watermark { position: absolute; left: 845px; bottom: 24px; width: 230px; text-align: center; color: rgba(160, 160, 160, .35); pointer-events: none; font: 700 62px/76px "DejaVu Sans", sans-serif; }
.watermark b { display: block; direction: rtl; }
.watermark span { display: block; font: 600 37px/40px "Open Sans", sans-serif; color: rgba(160, 160, 160, .5); }
```
